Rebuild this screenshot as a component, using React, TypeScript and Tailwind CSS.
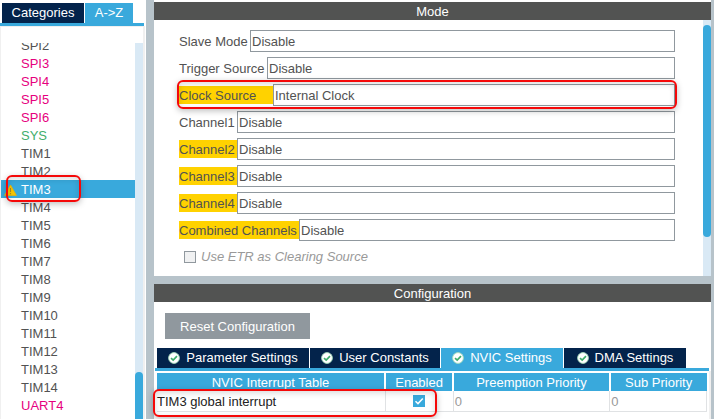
import { useState } from 'react';
import clsx from 'clsx';

type Peripheral = { name: string; tone?: 'pink' | 'green'; warning?: boolean };

const peripherals: Peripheral[] = [
  { name: 'SPI2' },
  { name: 'SPI3', tone: 'pink' },
  { name: 'SPI4', tone: 'pink' },
  { name: 'SPI5', tone: 'pink' },
  { name: 'SPI6', tone: 'pink' },
  { name: 'SYS', tone: 'green' },
  { name: 'TIM1' },
  { name: 'TIM2' },
  { name: 'TIM3', warning: true },
  { name: 'TIM4' },
  { name: 'TIM5' },
  { name: 'TIM6' },
  { name: 'TIM7' },
  { name: 'TIM8' },
  { name: 'TIM9' },
  { name: 'TIM10' },
  { name: 'TIM11' },
  { name: 'TIM12' },
  { name: 'TIM13' },
  { name: 'TIM14' },
  { name: 'UART4', tone: 'pink' },
  { name: 'UART5', tone: 'pink' },
];

const modeFields = [
  { id: 'slave', label: 'Slave Mode', value: 'Disable', width: 'w-[71px]' },
  { id: 'trigger', label: 'Trigger Source', value: 'Disable', width: 'w-[88px]' },
  { id: 'clock', label: 'Clock Source', value: 'Internal Clock', width: 'w-[94px]', flagged: true, outlined: true },
  { id: 'ch1', label: 'Channel1', value: 'Disable', width: 'w-[58px]' },
  { id: 'ch2', label: 'Channel2', value: 'Disable', width: 'w-[58px]', flagged: true },
  { id: 'ch3', label: 'Channel3', value: 'Disable', width: 'w-[58px]', flagged: true },
  { id: 'ch4', label: 'Channel4', value: 'Disable', width: 'w-[58px]', flagged: true },
  { id: 'combined', label: 'Combined Channels', value: 'Disable', width: 'w-[120px]', flagged: true },
];

const configTabs = ['Parameter Settings', 'User Constants', 'NVIC Settings', 'DMA Settings'];

function Outline({ className }: { className: string }) {
  return (
    <span
      aria-hidden="true"
      className={clsx(
        'pointer-events-none absolute z-10 rounded-md border-2 border-[#f50808] shadow-[0_2px_6px_rgba(0,0,0,0.25),inset_0_2px_6px_rgba(0,0,0,0.15)]',
        className,
      )}
    />
  );
}

function WarningIcon() {
  return (
    <svg viewBox="0 0 13 12" className="h-3 w-[13px]" aria-hidden="true">
      <path d="M6.5 1 12.4 11.4H.6Z" fill="#f7c600" stroke="#f0b400" strokeWidth="0.8" strokeLinejoin="round" />
      <path d="M6.5 4v4M6.5 9v1.3" stroke="#a88a20" strokeWidth="1.1" />
    </svg>
  );
}

function CheckBadge() {
  return (
    <svg viewBox="0 0 12 12" className="size-3" aria-hidden="true">
      <circle cx="6" cy="6" r="5.4" fill="#fff" stroke="#a5dcbb" strokeWidth="0.9" />
      <path d="M3 6.1 5.2 8.1 9 4.2" fill="none" stroke="#3fae6c" strokeWidth="1.7" />
    </svg>
  );
}

function Sidebar() {
  const [selected, setSelected] = useState('TIM3');
  return (
    <aside className="flex w-[146px] shrink-0 flex-col pt-[3px]">
      <div className="flex gap-px pl-0.5 text-white">
        <button className="h-5 w-[82px] bg-[#03234b]">Categories</button>
        <button className="h-5 w-12 bg-[#39a9dc]">A-&gt;Z</button>
      </div>
      <div className="mr-0.5 h-[3px] shrink-0 bg-[#39a9dc]" />
      <div className="mr-px flex min-h-0 flex-1 border-t border-r-2 border-l border-[#f0f0f0] pt-4">
        <div className="min-w-0 flex-1 overflow-hidden">
          <ul className="-mt-[7px]">
            {peripherals.map((p) => (
              <li key={p.name} className="relative">
                <button
                  onClick={() => setSelected(p.name)}
                  className={clsx(
                    'flex h-[18px] w-full items-center pt-px text-left',
                    selected === p.name
                      ? 'bg-[#39a9dc] text-white'
                      : p.tone === 'pink'
                        ? 'text-[#e6007e]'
                        : p.tone === 'green'
                          ? 'text-[#3fae6c]'
                          : 'text-[#525252]',
                  )}
                >
                  <span className="flex w-5 shrink-0 pl-[3px]">{p.warning && <WarningIcon />}</span>
                  {p.name}
                </button>
                {p.warning && <Outline className="-top-[5px] -bottom-1 left-[5px] w-[75px]" />}
              </li>
            ))}
          </ul>
        </div>
        <div className="flex w-2 flex-col bg-[#d9e9f5]">
          <div className="h-[329px] shrink-0" />
          <div className="flex-1 rounded-t bg-[#39a9dc]" />
        </div>
      </div>
    </aside>
  );
}

function ModePanel() {
  return (
    <section className="pt-0.5">
      <h2 className="h-[18px] bg-[#525352] text-center leading-5 text-white">Mode</h2>
      <div className="flex h-64">
        <form className="flex min-w-0 flex-1 flex-col gap-[5px] pt-2.5 pr-7 pl-[25px]">
          {modeFields.map((f) => (
            <div key={f.id} className="relative flex items-center">
              <label
                htmlFor={f.id}
                className={clsx('h-[18px] shrink-0 leading-5 whitespace-nowrap', f.width, f.flagged && 'bg-[#ffd200]')}
              >
                {f.label}
              </label>
              <select
                id={f.id}
                defaultValue={f.value}
                className="h-[22px] min-w-0 flex-1 appearance-none border border-[#90989e] bg-white pt-px pl-px"
              >
                <option>{f.value}</option>
              </select>
              {f.outlined && <Outline className="-inset-x-0.5 -top-1 -bottom-[3px]" />}
            </div>
          ))}
          <label className="mt-0.5 flex h-[18px] items-center gap-[5px] pl-[5px] leading-5 text-[#999] italic">
            <input
              type="checkbox"
              disabled
              className="size-3 appearance-none border border-[#90989e] bg-[#f0f1f2]"
            />
            Use ETR as Clearing Source
          </label>
        </form>
        <div className="w-2 bg-[#d9e9f5] pt-[5px]">
          <div className="h-[212px] rounded bg-[#39a9dc]" />
        </div>
      </div>
    </section>
  );
}

function NvicTable() {
  const [enabled, setEnabled] = useState(true);
  return (
    <div className="relative mr-0.5 ml-[3px] min-h-0 flex-1">
      <table className="w-full table-fixed border-collapse text-left">
        <colgroup>
          <col className="w-[41.5%]" />
          <col className="w-[12.4%]" />
          <col className="w-[28.5%]" />
          <col />
        </colgroup>
        <thead>
          <tr className="h-[18px] bg-[#39a9dc] text-center leading-4 text-white">
            {['NVIC Interrupt Table', 'Enabled', 'Preemption Priority', 'Sub Priority'].map((h) => (
              <th key={h} className="border-r-2 border-white p-0 pt-0.5 font-normal last:border-r-0">
                {h}
              </th>
            ))}
          </tr>
        </thead>
        <tbody>
          <tr className="border-b border-[#e0e2e4] leading-[18px]">
            <td className="border-r border-[#e0e2e4] p-0 pt-0.5 text-[#222]">TIM3 global interrupt</td>
            <td className="border-r border-[#e0e2e4] p-0">
              <label className="flex items-center justify-center">
                <span className="relative flex size-3">
                  <input
                    type="checkbox"
                    aria-label="Enable TIM3 global interrupt"
                    checked={enabled}
                    onChange={() => setEnabled(!enabled)}
                    className="size-3 appearance-none border border-[#39a9dc] bg-white checked:bg-[#39a9dc]"
                  />
                  <svg viewBox="0 0 12 12" className="pointer-events-none absolute inset-0 size-3" aria-hidden="true">
                    <path d="M2.5 6.2 5 8.6 9.8 3.5" fill="none" stroke="#fff" strokeWidth="1.5" />
                  </svg>
                </span>
              </label>
            </td>
            <td className="border-r border-[#e0e2e4] p-0 pt-0.5 pl-px text-[#999]">0</td>
            <td className="border-r border-[#e0e2e4] p-0 pt-0.5 pl-px text-[#999]">0</td>
          </tr>
        </tbody>
      </table>
      <Outline className="top-4 -left-1 h-7 w-[284px]" />
    </div>
  );
}

function ConfigurationPanel() {
  const [active, setActive] = useState('NVIC Settings');
  return (
    <section className="flex min-h-0 flex-1 flex-col">
      <h2 className="h-[18px] shrink-0 bg-[#525352] text-center leading-5 text-white">Configuration</h2>
      <div className="px-[11px] pt-[11px] pb-[9px]">
        <button className="h-[26px] w-[145px] bg-[#90989e] pt-0.5 text-white">Reset Configuration</button>
      </div>
      <div className="flex gap-px pl-[3px] text-white">
        {configTabs.map((tab) => (
          <button
            key={tab}
            onClick={() => setActive(tab)}
            className={clsx(
              'flex h-5 items-center justify-center gap-1.5 whitespace-nowrap',
              tab === 'Parameter Settings' ? 'w-[152px]' : tab === 'User Constants' ? 'w-[130px]' : 'w-[122px]',
              active === tab ? 'bg-[#39a9dc]' : 'bg-[#03234b]',
            )}
          >
            <CheckBadge />
            {tab}
          </button>
        ))}
      </div>
      <div className="mr-0.5 ml-px h-[3px] shrink-0 bg-[#39a9dc]" />
      <div className="flex min-h-0 flex-1 border-r-2 border-[#f0f0f0] pt-0.5">
        <NvicTable />
      </div>
    </section>
  );
}

export default function App() {
  return (
    <div className="flex h-screen overflow-hidden bg-white font-['Liberation_Sans',Arial,sans-serif] text-[13px] text-[#525252]">
      <Sidebar />
      <main className="flex min-w-0 flex-1 flex-col border-r-[3px] border-l-8 border-[#b7c3ca]">
        <ModePanel />
        <div className="h-2 shrink-0 bg-[#b7c3ca]" />
        <ConfigurationPanel />
      </main>
    </div>
  );
}
